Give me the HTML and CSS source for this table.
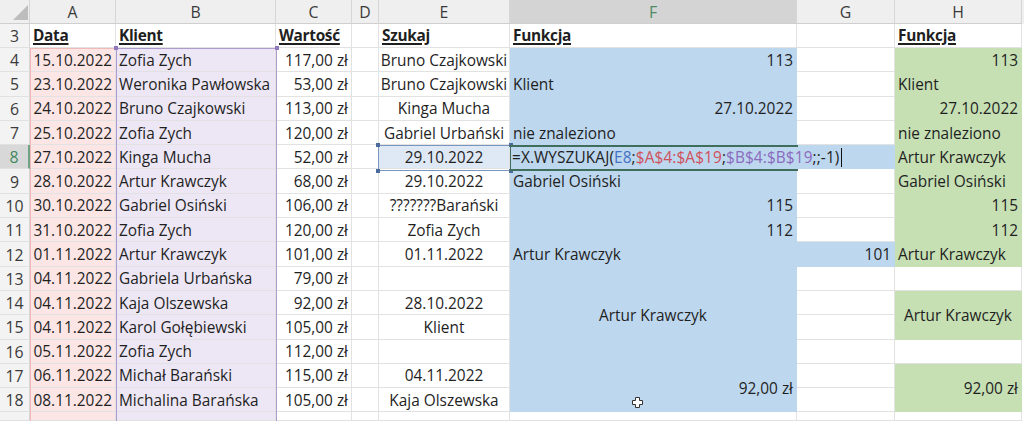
FILE: index.html
```html
<!DOCTYPE html>
<html lang="pl">
<head>
<meta charset="utf-8">
<title>X.WYSZUKAJ</title>
<link rel="stylesheet" href="styles.css">
</head>
<body>
<div class="sheet">
  <!-- column headers -->
  <div class="corner"><svg width="30" height="23" viewBox="0 0 30 23"><polygon points="13,20 28,20 28,5" fill="#bdbdbd"/></svg></div>
  <div class="ch">A</div><div class="ch">B</div><div class="ch">C</div><div class="ch">D</div><div class="ch">E</div><div class="ch sel">F</div><div class="ch">G</div><div class="ch">H</div>

  <!-- row 3 -->
  <div class="rh">3</div>
  <div class="c"><span class="hd">Data</span></div>
  <div class="c"><span class="hd">Klient</span></div>
  <div class="c"><span class="hd">Wartość</span></div>
  <div class="c"></div>
  <div class="c"><span class="hd">Szukaj</span></div>
  <div class="c"><span class="hd">Funkcja</span></div>
  <div class="c"></div>
  <div class="c"><span class="hd">Funkcja</span></div>

  <!-- row 4 -->
  <div class="rh">4</div>
  <div class="c a r">15.10.2022</div><div class="c b">Zofia Zych</div><div class="c r">117,00 zł</div><div class="c"></div>
  <div class="c m">Bruno Czajkowski</div><div class="c bl r">113</div><div class="c"></div><div class="c gr r">113</div>

  <!-- row 5 -->
  <div class="rh">5</div>
  <div class="c a r">23.10.2022</div><div class="c b">Weronika Pawłowska</div><div class="c r">53,00 zł</div><div class="c"></div>
  <div class="c m">Bruno Czajkowski</div><div class="c bl">Klient</div><div class="c"></div><div class="c gr">Klient</div>

  <!-- row 6 -->
  <div class="rh">6</div>
  <div class="c a r">24.10.2022</div><div class="c b">Bruno Czajkowski</div><div class="c r">113,00 zł</div><div class="c"></div>
  <div class="c m">Kinga Mucha</div><div class="c bl r">27.10.2022</div><div class="c"></div><div class="c gr r">27.10.2022</div>

  <!-- row 7 -->
  <div class="rh">7</div>
  <div class="c a r">25.10.2022</div><div class="c b">Zofia Zych</div><div class="c r">120,00 zł</div><div class="c"></div>
  <div class="c m">Gabriel Urbański</div><div class="c bl">nie znaleziono</div><div class="c"></div><div class="c gr">nie znaleziono</div>

  <!-- row 8 -->
  <div class="rh rsel">8</div>
  <div class="c a r">27.10.2022</div><div class="c b">Kinga Mucha</div><div class="c r">52,00 zł</div><div class="c"></div>
  <div class="c m e8">29.10.2022</div>
  <div class="c bl c2 formula">=X.WYSZUKAJ(<span class="ref-e">E8</span>;<span class="ref-a">$A$4:$A$19</span>;<span class="ref-b">$B$4:$B$19</span>;;-1)<span class="caret"></span></div>
  <div class="c gr">Artur Krawczyk</div>

  <!-- row 9 -->
  <div class="rh">9</div>
  <div class="c a r">28.10.2022</div><div class="c b">Artur Krawczyk</div><div class="c r">68,00 zł</div><div class="c"></div>
  <div class="c m">29.10.2022</div><div class="c bl">Gabriel Osiński</div><div class="c"></div><div class="c gr">Gabriel Osiński</div>

  <!-- row 10 -->
  <div class="rh">10</div>
  <div class="c a r">30.10.2022</div><div class="c b">Gabriel Osiński</div><div class="c r">106,00 zł</div><div class="c"></div>
  <div class="c m">???????Barański</div><div class="c bl r">115</div><div class="c"></div><div class="c gr r">115</div>

  <!-- row 11 -->
  <div class="rh">11</div>
  <div class="c a r">31.10.2022</div><div class="c b">Zofia Zych</div><div class="c r">120,00 zł</div><div class="c"></div>
  <div class="c m">Zofia Zych</div><div class="c bl r">112</div><div class="c"></div><div class="c gr r">112</div>

  <!-- row 12 -->
  <div class="rh">12</div>
  <div class="c a r">01.11.2022</div><div class="c b">Artur Krawczyk</div><div class="c r">101,00 zł</div><div class="c"></div>
  <div class="c m">01.11.2022</div><div class="c bl">Artur Krawczyk</div><div class="c bl r">101</div><div class="c gr">Artur Krawczyk</div>

  <!-- row 13 -->
  <div class="rh">13</div>
  <div class="c a r">04.11.2022</div><div class="c b">Gabriela Urbańska</div><div class="c r">79,00 zł</div><div class="c"></div>
  <div class="c"></div><div class="c bl"></div><div class="c"></div><div class="c"></div>

  <!-- row 14 -->
  <div class="rh">14</div>
  <div class="c a r">04.11.2022</div><div class="c b">Kaja Olszewska</div><div class="c r">92,00 zł</div><div class="c"></div>
  <div class="c m">28.10.2022</div><div class="c bl m s2">Artur Krawczyk</div><div class="c"></div><div class="c gr m s2">Artur Krawczyk</div>

  <!-- row 15 -->
  <div class="rh">15</div>
  <div class="c a r">04.11.2022</div><div class="c b">Karol Gołębiewski</div><div class="c r">105,00 zł</div><div class="c"></div>
  <div class="c m">Klient</div><div class="c"></div>

  <!-- row 16 -->
  <div class="rh">16</div>
  <div class="c a r">05.11.2022</div><div class="c b">Zofia Zych</div><div class="c r">112,00 zł</div><div class="c"></div>
  <div class="c"></div><div class="c bl"></div><div class="c"></div><div class="c"></div>

  <!-- row 17 -->
  <div class="rh">17</div>
  <div class="c a r">06.11.2022</div><div class="c b">Michał Barański</div><div class="c r">115,00 zł</div><div class="c"></div>
  <div class="c m">04.11.2022</div><div class="c bl r s2">92,00 zł</div><div class="c"></div><div class="c gr r s2">92,00 zł</div>

  <!-- row 18 -->
  <div class="rh">18</div>
  <div class="c a r">08.11.2022</div><div class="c b">Michalina Barańska</div><div class="c r">105,00 zł</div><div class="c"></div>
  <div class="c m">Kaja Olszewska</div><div class="c"></div>

  <!-- row 19 (only its top edge is in view) -->
  <div class="rh"></div>
  <div class="c a"></div><div class="c b"></div><div class="c"></div><div class="c"></div>
  <div class="c"></div><div class="c"></div><div class="c"></div><div class="c"></div>

  <!-- overlays: reference highlights, active cell, mouse cursor -->
  <div class="range range-a"></div>
  <div class="range range-b"><i class="h tl"></i><i class="h tr"></i></div>
  <div class="range range-e"><i class="h tl"></i><i class="h tr"></i><i class="h bl2"></i><i class="h br"></i></div>
  <div class="active"></div>
  <svg class="mouse" width="11" height="11" viewBox="0 0 11 11"><path d="M3.5 0.5h4v3h3v4h-3v3h-4v-3h-3v-4h3z" fill="#fff" stroke="#333" stroke-width="1"/></svg>
</div>
</body>
</html>
```
FILE: styles.css
```css
* { box-sizing: border-box; }

html, body {
  margin: 0;
  padding: 0;
  background: #ffffff;
  overflow: hidden;
}

.sheet {
  position: relative;
  display: grid;
  grid-template-columns: 30px 86px 160px 76px 27px 131px 287px 98px 127px;
  grid-template-rows: 23.7px repeat(16, 24.3px) 8.5px;
  width: 1024px;
  height: 421px;
  overflow: hidden;
  font-family: "Open Sans", "Liberation Sans", sans-serif;
  font-size: 15.4px;
  color: #1f1f1f;
  background: linear-gradient(#efefef 0 23.7px, #ffffff 23.7px);
}

.corner {
  background: #efefef;
  border-right: 1px solid #d6d6d6;
  border-bottom: 1px solid #cfcfcf;
}
.corner svg { display: block; }

.ch {
  background: #efefef;
  border-right: 1px solid #d6d6d6;
  border-bottom: 1px solid #cfcfcf;
  display: flex;
  align-items: center;
  justify-content: center;
  color: #3a3a3a;
  font-size: 15.8px;
  padding-top: 1px;
}
.ch.sel {
  background: #d4d4d4;
  color: #4d8a66;
}

.rh {
  background: #f3f3f3;
  border-right: 1px solid #d6d6d6;
  border-bottom: 1px solid #e1e1e1;
  display: flex;
  align-items: center;
  justify-content: center;
  color: #3a3a3a;
  font-size: 15.8px;
  padding-top: 1px;
}
.rh.rsel {
  background: #d8d8d8;
  color: #3f8a5f;
  border-right: 2px solid #6fa386;
}

.c {
  display: flex;
  align-items: center;
  padding: 1px 3px 0 3px;
  white-space: nowrap;
  border-right: 1px solid #e2e2e2;
  border-bottom: 1px solid #e2e2e2;
  min-width: 0;
}
.r { justify-content: flex-end; }
.m { justify-content: center; }

.hd {
  font-weight: 700;
  letter-spacing: -0.3px;
  text-decoration: underline;
  text-decoration-thickness: 1.5px;
  text-underline-offset: 2px;
}

.a { background: #fbe6e5; }
.b { background: #ede7f5; }
.bl { background: #bdd7ee; border-color: #bdd7ee; }
.gr { background: #c6e0b4; border-color: #c6e0b4; }

.s2 { grid-row: span 2; }
.c2 { grid-column: span 2; }

.e8 { background: #dfe9f5; }

.formula { padding-left: 2px; letter-spacing: 0.1px; }
.ref-e { color: #4472c4; }
.ref-a { color: #d0505b; }
.ref-b { color: #8a6bbd; }
.caret {
  display: inline-block;
  width: 1px;
  height: 19px;
  margin-left: 2px;
  background: #111111;
}

.range {
  position: absolute;
  pointer-events: none;
}
.range-a {
  left: 30px;
  top: 47.5px;
  width: 87px;
  height: 400px;
  border: 1px solid #f2b9b9;
}
.range-b {
  left: 115.5px;
  top: 47.5px;
  width: 161px;
  height: 400px;
  border: 1.5px solid #ad9bd0;
}
.range-e {
  left: 378px;
  top: 145px;
  width: 133px;
  height: 25.5px;
  border: 1.5px solid #7896c0;
}
.h {
  position: absolute;
  width: 4px;
  height: 4px;
}
.range-b .h { background: #8f78bb; }
.range-e .h { background: #4a6b9c; }
.tl { left: -3px; top: -3px; }
.tr { right: -3px; top: -3px; }
.bl2 { left: -3px; bottom: -3px; }
.br { right: -3px; bottom: -3px; }

.active {
  position: absolute;
  left: 510px;
  top: 144.5px;
  width: 288px;
  height: 26px;
  border-top: 2px solid #3f6f5c;
  border-bottom: 2px solid #3f6f5c;
  border-left: 1px solid #3f6f5c;
  pointer-events: none;
}

.mouse {
  position: absolute;
  left: 632px;
  top: 397px;
}
```
